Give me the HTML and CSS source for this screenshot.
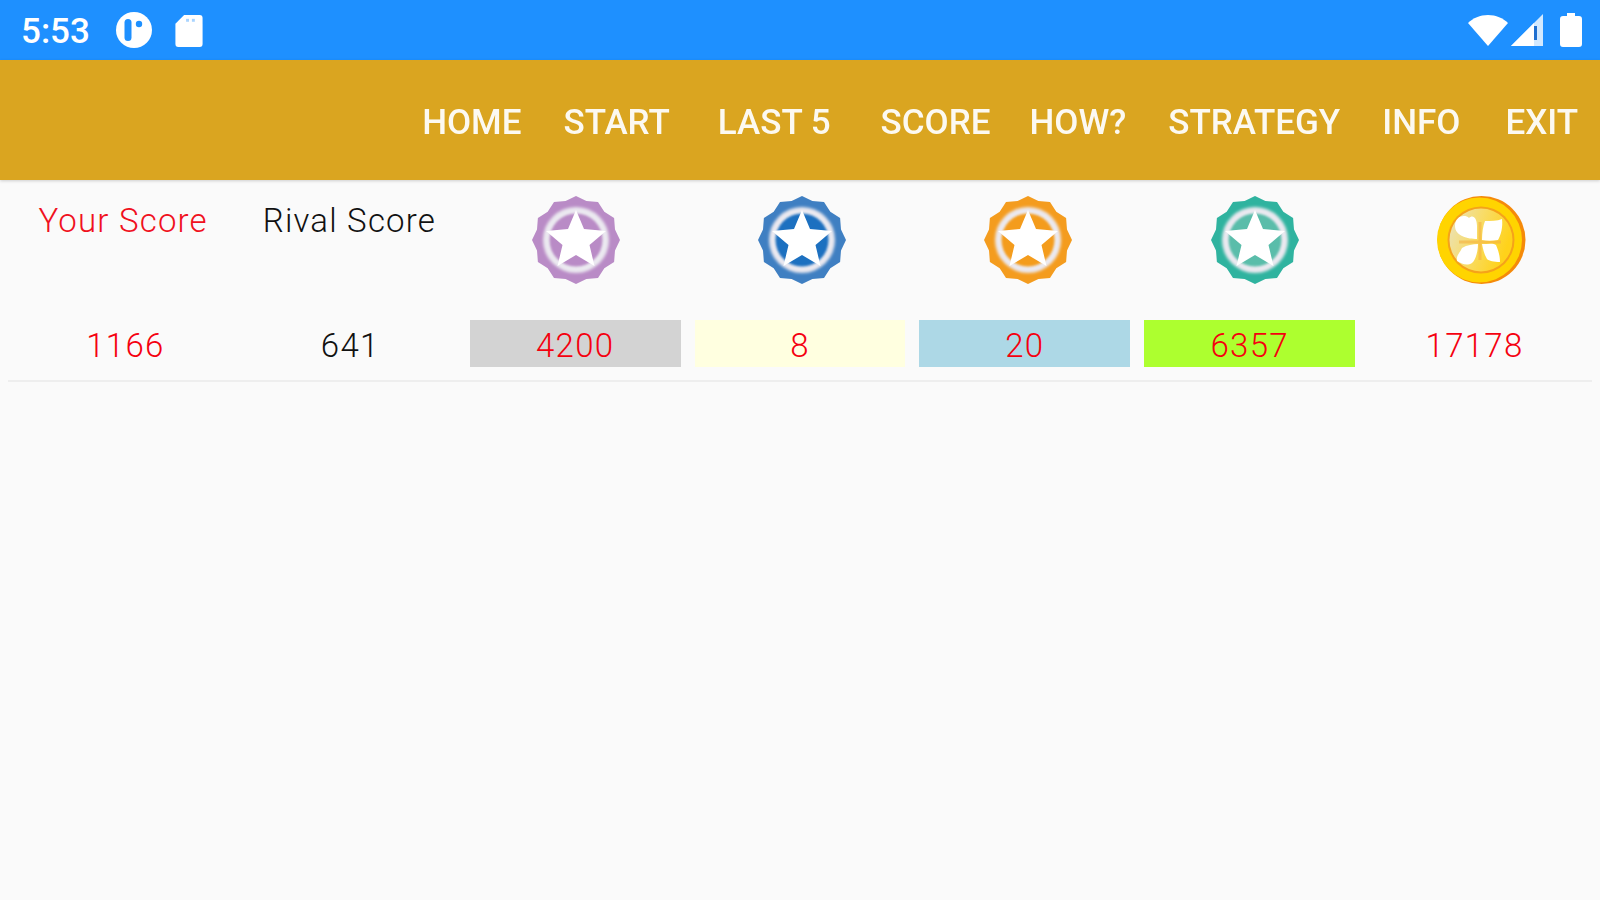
FILE: index.html
```html
<!DOCTYPE html>
<html lang="en">
<head>
<meta charset="utf-8">
<title>Score</title>
<link rel="stylesheet" href="styles.css">
</head>
<body>
<svg class="defs" width="0" height="0" aria-hidden="true">
  <defs>
    <filter id="soft" x="-20%" y="-20%" width="140%" height="140%"><feGaussianBlur stdDeviation="1.8"/></filter>
    <filter id="softer" x="-20%" y="-20%" width="140%" height="140%"><feGaussianBlur stdDeviation="0.9"/></filter>
    <symbol id="badge" viewBox="-45 -45 90 90">
      <polygon class="badge-edge" points="0,-44 10.4,-39 22,-38.1 28.3,-28.3 38.1,-22 39,-10.4 44,0 39,10.4 38.1,22 28.3,28.3 22,38.1 10.4,39 0,44 -10.4,39 -22,38.1 -28.3,28.3 -38.1,22 -39,10.4 -44,0 -39,-10.4 -38.1,-22 -28.3,-28.3 -22,-38.1 -10.4,-39"/>
      <circle class="badge-ring" r="33" filter="url(#soft)"/>
      <circle class="badge-core" r="26.5" filter="url(#softer)"/>
      <polygon class="badge-star" points="0,-30 8,-11 30,-9 13.5,5 18.5,26 0,15 -18.5,26 -13.5,5 -30,-9 -8,-11"/>
    </symbol>
  </defs>
</svg>

<header class="status-bar">
  <div class="status-left">
    <span class="clock">5:53</span>
    <svg class="ic-p" viewBox="0 0 36 36"><circle cx="18" cy="18" r="18" fill="#fff"/><rect x="8.5" y="7" width="7" height="22" rx="3.5" fill="#1e90ff"/><circle cx="23" cy="12" r="3.2" fill="#1e90ff"/></svg>
    <svg class="ic-sd" viewBox="0 0 28 34"><path d="M9 1h16a3 3 0 0 1 3 3v27a3 3 0 0 1-3 3H3a3 3 0 0 1-3-3V10z" fill="#fff"/><rect x="11" y="5" width="3" height="3" fill="#a9d4ff"/><rect x="17" y="5" width="3" height="3" fill="#a9d4ff"/></svg>
  </div>
  <div class="status-right">
    <svg class="ic-wifi" viewBox="0 0 40 32"><path d="M0 9C5 4 12 1 20 1s15 3 20 8L20 32z" fill="#fff"/></svg>
    <svg class="ic-signal" viewBox="0 0 32 32"><path d="M32 0v32H0z" fill="#fff" fill-opacity=".8"/><path d="M23 9v23H0z" fill="#fff"/><rect x="23" y="12" width="3" height="14" fill="#1e6fd0"/></svg>
    <svg class="ic-battery" viewBox="0 0 22 34"><path d="M7 0h8v3h4a3 3 0 0 1 3 3v25a3 3 0 0 1-3 3H3a3 3 0 0 1-3-3V6a3 3 0 0 1 3-3h4z" fill="#fff"/></svg>
  </div>
</header>

<nav class="nav">
  <a class="tab">HOME</a>
  <a class="tab">START</a>
  <a class="tab tab-wide">LAST 5</a>
  <a class="tab tab-tight">SCORE</a>
  <a class="tab">HOW?</a>
  <a class="tab">STRATEGY</a>
  <a class="tab">INFO</a>
  <a class="tab tab-exit">EXIT</a>
</nav>

<main class="board">
  <div class="heads">
    <div class="head head-you">Your Score</div>
    <div class="head">Rival Score</div>
    <div class="medal purple"><svg><use href="#badge"/></svg></div>
    <div class="medal blue"><svg><use href="#badge"/></svg></div>
    <div class="medal orange"><svg><use href="#badge"/></svg></div>
    <div class="medal teal"><svg><use href="#badge"/></svg></div>
    <div class="medal coin">
      <svg viewBox="-45 -45 90 90">
        <defs>
          <linearGradient id="coinface" x1="0" y1="0" x2="1" y2="0.35">
            <stop offset="0" stop-color="#e9e2c0"/>
            <stop offset="0.5" stop-color="#f8dc68"/>
            <stop offset="1" stop-color="#ffd21a"/>
          </linearGradient>
        </defs>
        <circle cx="0.5" r="44" fill="#f58a0a"/>
        <circle cx="-1.5" r="42.5" fill="#ffd400"/>
        <circle r="33.5" fill="#f5a21a"/>
        <circle r="31.5" fill="url(#coinface)"/>
        <path d="M-22 2H20M-1 -18V20" stroke="#f5b040" stroke-opacity=".6" stroke-width="3" fill="none"/>
        <path d="M-4 -1C-13 -1 -26 -4 -26 -14C-26 -24 -16 -26 -12 -22C-8 -26 -4 -22 -4 -14Z" fill="#fff"/>
        <path d="M1 0C1 -7 2 -14 4 -19C10 -19 16 -19 21 -21C22 -13 20 -5 17 0C11 1 6 1 1 0Z" fill="#fff"/>
        <path d="M-3 4C-3 12 -6 21 -9 23C-14 26 -19 24 -24 21C-25 15 -21 13 -19 8C-14 5 -8 4 -3 4Z" fill="#fff"/>
        <path d="M1 4C7 4 13 3 15 5C17 10 19 15 19 22C13 22 8 21 6 19C3 14 2 9 1 4Z" fill="#fff"/>
      </svg>
    </div>
  </div>
  <div class="values">
    <div class="val val-you">1166</div>
    <div class="val val-rival">641</div>
    <div class="val bg-gray">4200</div>
    <div class="val bg-yellow">8</div>
    <div class="val bg-blue">20</div>
    <div class="val bg-green">6357</div>
    <div class="val">17178</div>
  </div>
</main>
</body>
</html>
```

FILE: styles.css
```css
* { box-sizing: border-box; }
html, body { margin: 0; height: 100%; }
body {
  width: 1600px;
  height: 900px;
  overflow: hidden;
  background: #fafafa;
  font-family: Roboto, "Liberation Sans", sans-serif;
  display: flex;
  flex-direction: column;
}
.defs { display: block; height: 0; }

.status-bar {
  height: 60px;
  flex: none;
  background: #1e90ff;
  display: flex;
  align-items: center;
  justify-content: space-between;
  padding: 0 18px 0 21px;
  color: #fff;
}
.status-left, .status-right { display: flex; align-items: center; }
.clock { font-size: 35px; font-weight: 500; width: 95px; padding-top: 2px; }
.ic-p { width: 36px; height: 36px; margin-right: 23px; }
.ic-sd { width: 28px; height: 33px; }
.ic-wifi { width: 40px; height: 32px; margin-right: 3px; }
.ic-signal { width: 32px; height: 32px; margin-right: 17px; }
.ic-battery { width: 22px; height: 34px; }

.nav {
  height: 120px;
  flex: none;
  background: #daa520;
  box-shadow: 0 1px 3px rgba(0,0,0,.18);
  display: flex;
  align-items: center;
  justify-content: flex-end;
  gap: 42px;
  padding: 4px 22px 0 0;
}
.tab { color: #fff; font-size: 35px; font-weight: 500; opacity: .94; }
.tab-wide { margin: 0 8px 0 6px; }
.tab-tight { margin-right: -3px; }
.tab-exit { margin-left: 3px; }

.board { display: flex; flex-direction: column; }
.heads {
  display: grid;
  grid-template-columns: repeat(7, 1fr);
  padding: 15px 6px 0 10px;
  height: 140px;
}
.head {
  text-align: center;
  font-size: 33px;
  font-weight: 300;
  letter-spacing: 1.2px;
  line-height: 48px;
  color: #111;
  padding-top: 2px;
}
.head-you { color: #f01020; }
.medal { display: flex; justify-content: center; }
.medal svg { width: 90px; height: 90px; filter: blur(.5px); }

.values {
  display: grid;
  grid-template-columns: repeat(7, 1fr);
  column-gap: 14px;
  margin: 0 8px;
  padding: 0 12px 13px;
  border-bottom: 2px solid #eeeeee;
}
.val {
  height: 47px;
  line-height: 51px;
  text-align: center;
  font-size: 33px;
  font-weight: 300;
  letter-spacing: 1.3px;
  color: #f5000f;
}
.val-rival { color: #111; }
.bg-gray { background: #d3d3d3; }
.bg-yellow { background: #ffffe0; }
.bg-blue { background: #add8e6; }
.bg-green { background: #adff2f; }

.badge-star { fill: #fff; }
.badge-ring { fill: #ebe9f0; }
.purple { --edge: #b98bc6; --core: #b98bc6; }
.blue { --edge: #3f7fc2; --core: #1f6fc0; }
.orange { --edge: #f49c1e; --core: #f49c1e; }
.teal { --edge: #2fb39f; --core: #5abdaa; }
.badge-edge { fill: var(--edge); }
.badge-core { fill: var(--core); }
```
